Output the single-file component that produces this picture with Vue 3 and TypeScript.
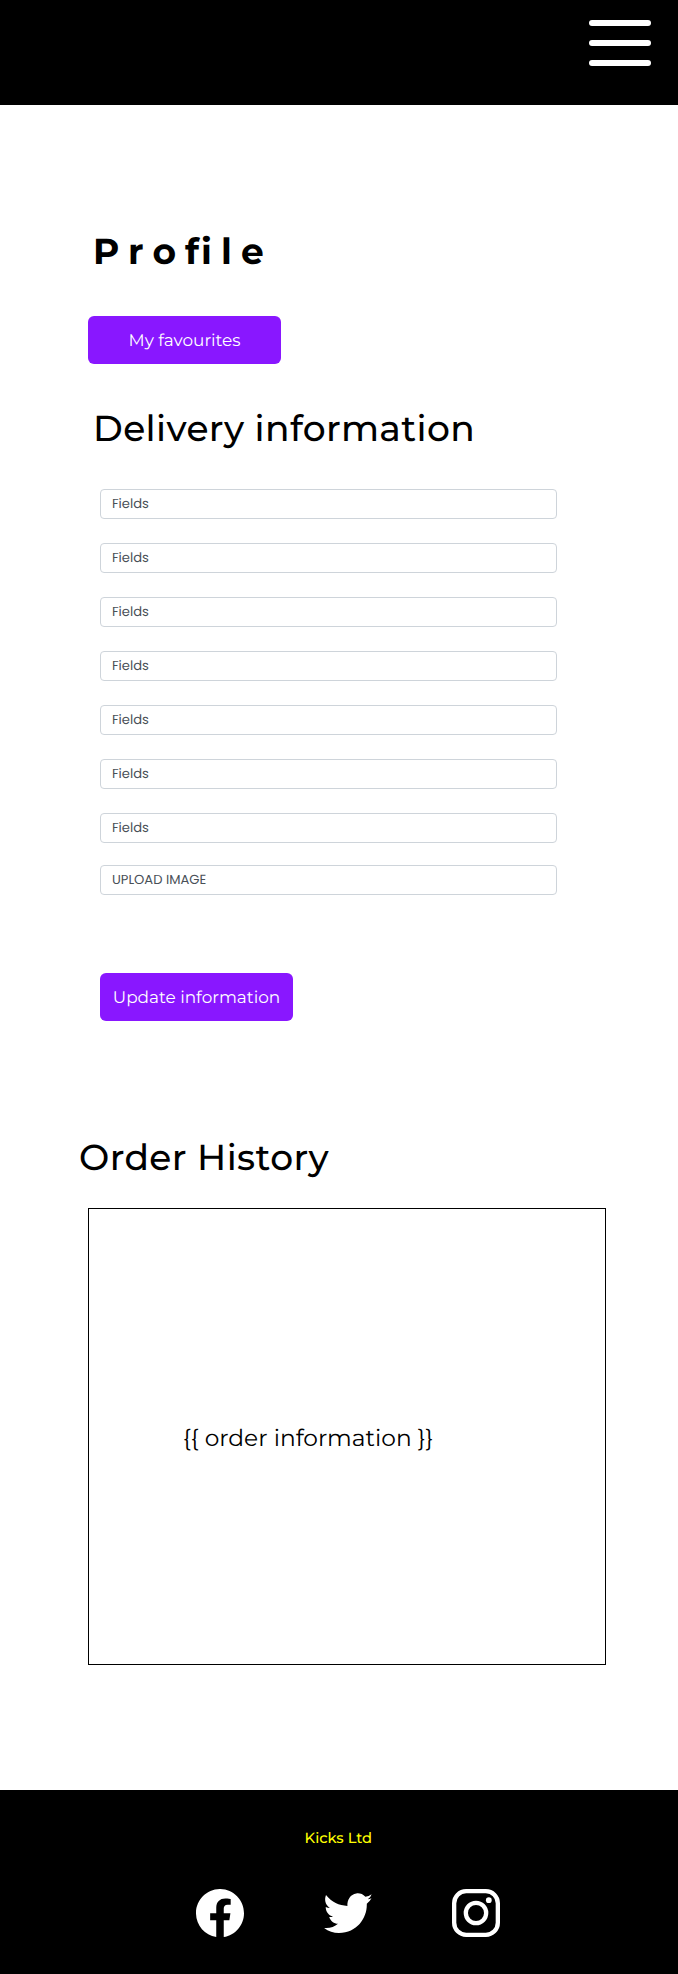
<script setup lang="ts">
interface Field {
  id: number
  label: string
}

const fields: Field[] = Array.from({ length: 7 }, (_, i) => ({ id: i, label: 'Fields' }))
const orderPlaceholder = '{{ order information }}'
</script>

<template>
  <div class="page">
    <header class="header">
      <button class="menu" type="button" aria-label="Menu">
        <span class="bar"></span>
        <span class="bar"></span>
        <span class="bar"></span>
      </button>
    </header>

    <main class="content">
      <h1 class="title">Pro<span class="tight">f</span>ile</h1>
      <button class="btn favourites" type="button">My favourites</button>

      <h2 class="heading delivery">Delivery information</h2>
      <form class="form" @submit.prevent>
        <div class="fields">
          <div v-for="field in fields" :key="field.id" class="field">{{ field.label }}</div>
        </div>
        <div class="field upload">UPLOAD IMAGE</div>
        <button class="btn update" type="submit">Update information</button>
      </form>

      <h2 class="heading history">Order History</h2>
      <section class="orders">{{ orderPlaceholder }}</section>
    </main>

    <footer class="footer">
      <p class="brand">Kicks Ltd</p>
      <nav class="social">
        <svg class="icon" viewBox="0 0 16 16" aria-label="Facebook">
          <path d="M16 8.049c0-4.446-3.582-8.05-8-8.05C3.58 0-.002 3.603-.002 8.05c0 4.017 2.926 7.347 6.75 7.951v-5.625h-2.03V8.05H6.75V6.275c0-2.017 1.195-3.131 3.022-3.131.876 0 1.791.157 1.791.157v1.98h-1.009c-.993 0-1.303.621-1.303 1.258v1.51h2.218l-.354 2.326H9.25V16c3.824-.604 6.75-3.934 6.75-7.951z" />
        </svg>
        <svg class="icon" viewBox="0 0 48 48" aria-label="Twitter">
          <path d="M15 44C33 44 42.800 29 42.800 16V14.700Q45.800 12.500 47.500 9.300Q45.500 10.300 43.800 10.300Q46.500 8.800 47.600 5.200Q44.800 7.200 41.400 7.700C38.800 5 35.600 3.900 32.300 4.400C26.600 5.200 23 10.500 23.400 16.900C15 16.700 7.800 13.200 2 6.100C.3 10.500.900 15.400 5.800 19.100Q3.600 19.100 1.700 18.100C1.700 23.200 5 26.700 9 27.700Q7.200 28.200 5.200 27.900C6.600 32.200 10 34.500 14 34.700C10.300 38 5.500 39.500 .1 38.900C4.400 42.200 9.500 44 15 44Z" />
        </svg>
        <svg class="icon" viewBox="0 0 16 16" aria-label="Instagram">
          <rect class="line" x=".72" y=".72" width="14.56" height="14.56" rx="4" />
          <circle class="line" cx="8" cy="8" r="3.39" />
          <circle cx="12.27" cy="3.73" r=".96" />
        </svg>
      </nav>
    </footer>
  </div>
</template>

<style>
body {
  background: #fff;
}
</style>

<style scoped>
.page {
  display: flex;
  flex-direction: column;
  width: 678px;
  height: 1974px;
  overflow: hidden;
  background: #fff;
  color: #000;
  font-family: Montserrat, Inter, sans-serif;
  text-rendering: geometricPrecision;
}

.header {
  box-sizing: border-box;
  display: flex;
  justify-content: flex-end;
  align-items: flex-start;
  height: 105px;
  padding: 20px 27px 0 0;
  background: #000;
}

.menu {
  display: flex;
  flex-direction: column;
  gap: 14px;
  width: 62px;
  padding: 0;
  border: 0;
  background: none;
}

.bar {
  height: 6px;
  border-radius: 3px;
  background: #fff;
}

.content {
  display: flex;
  flex-direction: column;
  align-items: flex-start;
}

.title {
  margin: 125px 0 0 93px;
  font-size: 36px;
  font-weight: 700;
  line-height: 44px;
  letter-spacing: 9.1px;
}

.tight {
  letter-spacing: 2px;
}

.btn {
  box-sizing: border-box;
  width: 193px;
  height: 48px;
  padding: 1px 0 0;
  border: 0;
  border-radius: 6px;
  background: #8917ff;
  color: #fff;
  font: 400 16.9px/20px Montserrat, Inter, sans-serif;
  text-rendering: geometricPrecision;
  white-space: nowrap;
}

.favourites {
  margin: 42px 0 0 88px;
}

.heading {
  margin: 0;
  font-size: 36px;
  font-weight: 500;
  line-height: 44px;
  letter-spacing: 0.4px;
}

.delivery {
  margin: 43px 0 0 93px;
}

.form {
  width: 457px;
  margin: 38px 0 0 100px;
}

.fields {
  display: flex;
  flex-direction: column;
  gap: 24px;
}

.field {
  box-sizing: border-box;
  height: 30px;
  padding-left: 11px;
  border: 1px solid #ced4da;
  border-radius: 4px;
  color: #495057;
  font: 400 13.1px/28px Poppins, Inter, sans-serif;
}

.upload {
  margin-top: 22px;
}

.update {
  display: block;
  margin-top: 78px;
}

.history {
  margin: 115px 0 0 79px;
}

.orders {
  box-sizing: border-box;
  display: flex;
  align-items: center;
  width: 518px;
  height: 457px;
  margin: 28px 0 0 88px;
  padding: 3px 0 0 94px;
  border: 1px solid #000;
  font-size: 23.3px;
  line-height: 28px;
}

.footer {
  display: flex;
  flex-direction: column;
  align-items: flex-start;
  height: 184px;
  margin-top: auto;
  background: #000;
}

.brand {
  margin: 39px 0 0 304.6px;
  color: #ff0;
  font-size: 14.7px;
  font-weight: 500;
  line-height: 18px;
}

.social {
  display: flex;
  gap: 80px;
  margin: 42px 0 0 196px;
}

.icon {
  width: 48px;
  height: 48px;
  fill: #fff;
}

.line {
  fill: none;
  stroke: #fff;
  stroke-width: 1.44;
}
</style>
